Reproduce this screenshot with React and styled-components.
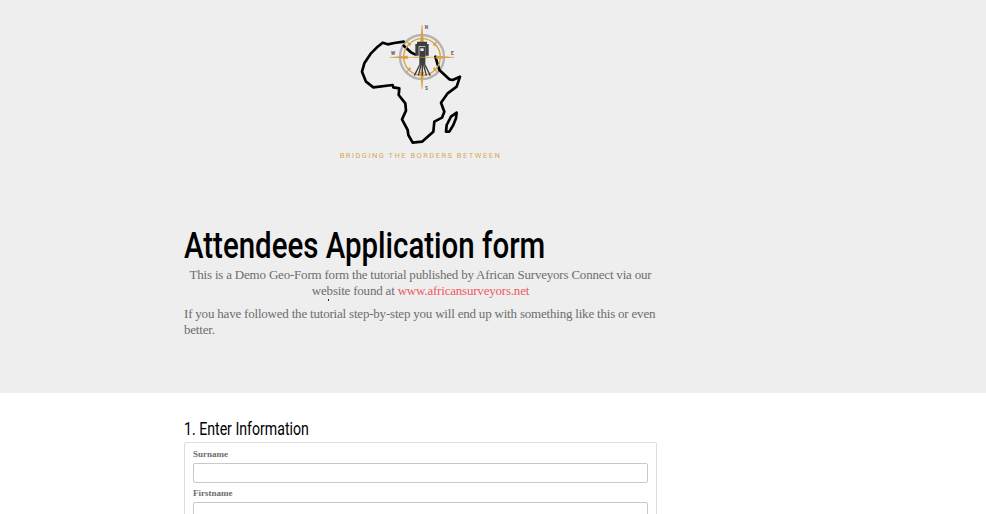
import React from 'react';
import styled, { createGlobalStyle } from 'styled-components';

const GlobalStyle = createGlobalStyle`
  html, body {
    margin: 0;
    padding: 0;
    background: #fff;
    overflow: hidden;
  }
`;

const SERIF = `"Liberation Serif", "DejaVu Serif", serif`;
const HEADING = `Roboto, "Liberation Sans", sans-serif`;

const Styled = {
  Page: styled.div`
    height: 514px;
    overflow: hidden;
  `,
  Hero: styled.header`
    background: #eeeeee;
    height: 393px;
    box-sizing: border-box;
    padding-top: 15px;
  `,
  Column: styled.div`
    width: 473px;
    margin-left: 184px;
  `,
  LogoWrap: styled.div`
    display: flex;
    flex-direction: column;
    align-items: center;
    height: 212px;
  `,
  Tagline: styled.div`
    font-family: Roboto, sans-serif;
    font-size: 7.5px;
    line-height: 8px;
    letter-spacing: 1.48px;
    color: #d9a75a;
    white-space: nowrap;
    margin-top: -13px;
  `,
  Title: styled.h1`
    font-family: ${HEADING};
    font-weight: 500;
    font-size: 36px;
    line-height: 38px;
    color: #000;
    margin: 0 0 2px;
    white-space: nowrap;
    transform: scaleX(0.818);
    transform-origin: left center;
  `,
  Intro: styled.div`
    position: relative;
    font-family: ${SERIF};
    font-size: 13px;
    letter-spacing: -0.2px;
    line-height: 16px;
    color: #6d6d6d;
  `,
  CenterText: styled.p`
    text-align: center;
    margin: 0 0 7px;
  `,
  Para: styled.p`
    margin: 0;
  `,
  Link: styled.a`
    color: #ee5a5f;
    text-decoration: none;
  `,
  Speck: styled.span`
    position: absolute;
    left: 144px;
    top: 32px;
    width: 1px;
    height: 2px;
    background: #222;
  `,
  Section: styled.section`
    padding-top: 27px;
  `,
  StepTitle: styled.h2`
    font-family: ${HEADING};
    font-weight: 400;
    font-size: 18px;
    line-height: 18px;
    color: #000;
    margin: 0 0 4px;
    white-space: nowrap;
    transform: scaleX(0.785);
    transform-origin: left center;
  `,
  Card: styled.form`
    border: 1px solid #dddddd;
    border-radius: 2px;
    padding: 6px 8px 0;
    display: flex;
    flex-direction: column;
    gap: 5px;
  `,
  Field: styled.div`
    display: flex;
    flex-direction: column;
    gap: 4px;
  `,
  Label: styled.label`
    font-family: ${SERIF};
    font-weight: 700;
    font-size: 9px;
    line-height: 10px;
    color: #6d6d6d;
  `,
  Input: styled.input`
    display: block;
    box-sizing: border-box;
    width: 100%;
    height: 20px;
    border: 1px solid #c8c8c8;
    border-radius: 2px;
    background: #fff;
    padding: 0 4px;
    margin: 0;
    outline: none;
  `,
};

const Logo = () => (
  <svg width="180" height="150" viewBox="0 0 540 450" fill="none">
    <circle cx="273" cy="126" r="66" stroke="#b4b4b4" strokeWidth="7" />
    <path
      d="M218 80 190 84 170 88 155 83 140 95 120 115 100 145 93 170 105 200 127 217 185 210 187 217 205 220 203 240 223 265 225 287 213 313 230 345 232 360 245 383 273 380 307 350 310 320 333 308 340 290 330 263 350 235 377 215 387 185 365 195 355 193 325 165 313 125"
      stroke="#000"
      strokeWidth="8"
      strokeLinejoin="round"
      strokeLinecap="round"
    />
    <path d="M218 92 240 112 252 118" stroke="#000" strokeWidth="8" strokeLinecap="round" />
    <path d="M377 293 360 305 347 330 345 350 355 350 367 330 375 310Z" stroke="#000" strokeWidth="8" strokeLinejoin="round" />
    <circle cx="273" cy="126" r="55" stroke="#d9a040" strokeWidth="4" />
    <g stroke="#d9a040" strokeWidth="2">
      <line x1="176" y1="127" x2="370" y2="127" />
      <line x1="273" y1="30" x2="273" y2="222" />
    </g>
    <g fill="#d9a040">
      <polygon points="273,30 279,85 267,85" />
      <polygon points="273,222 279,170 267,170" />
      <polygon points="176,127 230,122 230,132" />
      <polygon points="370,127 316,122 316,132" />
      <polygon points="225,76 241,89 235,94" />
      <polygon points="321,76 305,89 311,94" />
      <polygon points="321,174 305,161 311,156" />
      <polygon points="225,174 241,161 235,156" />
    </g>
    <g fill="#3d3d3d">
      <path d="M258 80h30v7h5v35h-10v-28h-20v28h-10v-35h5z" />
      <path d="M265 96h18v54h-18z" />
    </g>
    <g stroke="#3d3d3d" strokeWidth="4">
      <line x1="266" y1="150" x2="250" y2="182" />
      <line x1="270" y1="150" x2="262" y2="182" />
      <line x1="274" y1="150" x2="274" y2="182" />
      <line x1="278" y1="150" x2="286" y2="182" />
      <line x1="282" y1="150" x2="298" y2="182" />
    </g>
    <rect x="268" y="100" width="10" height="8" fill="#eeeeee" />
    <line x1="252" y1="127" x2="294" y2="127" stroke="#d9a040" strokeWidth="2" />
    <g fill="#555" fontFamily="Roboto, sans-serif" fontSize="14" fontWeight="700" textAnchor="middle">
      <text x="286" y="42">N</text>
      <text x="364" y="119">E</text>
      <text x="286" y="225">S</text>
      <text x="186" y="120">W</text>
    </g>
  </svg>
);

const App = () => (
  <Styled.Page>
    <GlobalStyle />
    <Styled.Hero>
      <Styled.Column>
        <Styled.LogoWrap>
          <Logo />
          <Styled.Tagline>BRIDGING THE BORDERS BETWEEN</Styled.Tagline>
        </Styled.LogoWrap>
        <Styled.Title>Attendees Application form</Styled.Title>
        <Styled.Intro>
          <Styled.CenterText>
            This is a Demo Geo-Form form the tutorial published by African Surveyors Connect via our website found at{' '}
            <Styled.Link href="#">www.africansurveyors.net</Styled.Link>
          </Styled.CenterText>
          <Styled.Speck />
          <Styled.Para>
            If you have followed the tutorial step-by-step you will end up with something like this or even better.
          </Styled.Para>
        </Styled.Intro>
      </Styled.Column>
    </Styled.Hero>
    <Styled.Section>
      <Styled.Column>
        <Styled.StepTitle>1. Enter Information</Styled.StepTitle>
        <Styled.Card>
          <Styled.Field>
            <Styled.Label>Surname</Styled.Label>
            <Styled.Input type="text" />
          </Styled.Field>
          <Styled.Field>
            <Styled.Label>Firstname</Styled.Label>
            <Styled.Input type="text" />
          </Styled.Field>
        </Styled.Card>
      </Styled.Column>
    </Styled.Section>
  </Styled.Page>
);

export default App;
